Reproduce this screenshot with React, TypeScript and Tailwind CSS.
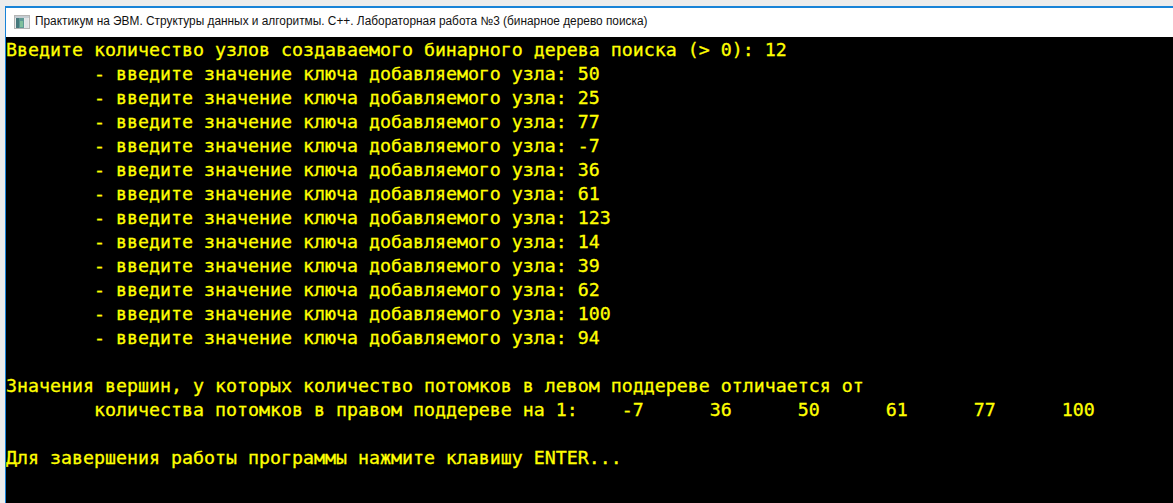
const prompt = "\t- введите значение ключа добавляемого узла: ";
const values = ["50", "25", "77", "-7", "36", "61", "123", "14", "39", "62", "100", "94"];
const lines = [
  "Введите количество узлов создаваемого бинарного дерева поиска (> 0): 12",
  ...values.map((v) => prompt + v),
  "",
  "Значения вершин, у которых количество потомков в левом поддереве отличается от",
  "\tколичества потомков в правом поддереве на 1:\t-7\t36\t50\t61\t77\t100",
  "",
  "Для завершения работы программы нажмите клавишу ENTER...",
];

function AppIcon() {
  return (
    <svg width="16" height="14" viewBox="0 0 16 14" className="shrink-0">
      <rect x="0.5" y="0.5" width="15" height="13" fill="#e8e8e8" stroke="#b4b4b4" />
      <rect x="1" y="1" width="14" height="2" fill="#c4ccd2" />
      <rect x="2" y="3" width="8" height="10" fill="#5f9a96" />
      <rect x="2" y="3" width="3" height="10" fill="#46787c" />
      <rect x="6" y="6" width="3" height="6" fill="#7fc09c" />
      <rect x="11" y="3" width="3" height="10" fill="#dfe3e6" />
    </svg>
  );
}

export default function App() {
  return (
    <div className="h-[503px] w-[1173px] overflow-hidden bg-[#ececec] pt-[6px] pl-[5px]">
      <div className="flex h-[497px] flex-col border-t-2 border-l border-[#1883d7] bg-white">
        <div className="flex h-[29px] shrink-0 items-center gap-[5px] pl-[8px] pb-[1px] font-['Liberation_Sans',sans-serif] text-[11.87px] text-[#111]">
          <AppIcon />
          <span className="whitespace-pre">Практикум на ЭВМ. Структуры данных и алгоритмы. С++. Лабораторная работа №3 (бинарное дерево поиска)</span>
        </div>
        <div className="flex-1 bg-black pt-px font-['DejaVu_Sans_Mono',monospace] text-[18.27px] leading-[24px] text-[#ffff00] [-webkit-text-stroke:0.3px_#ffff00]">
          {lines.map((l, i) => (
            <div key={i} className="h-[24px] whitespace-pre [tab-size:8]">{l}</div>
          ))}
        </div>
      </div>
    </div>
  );
}
